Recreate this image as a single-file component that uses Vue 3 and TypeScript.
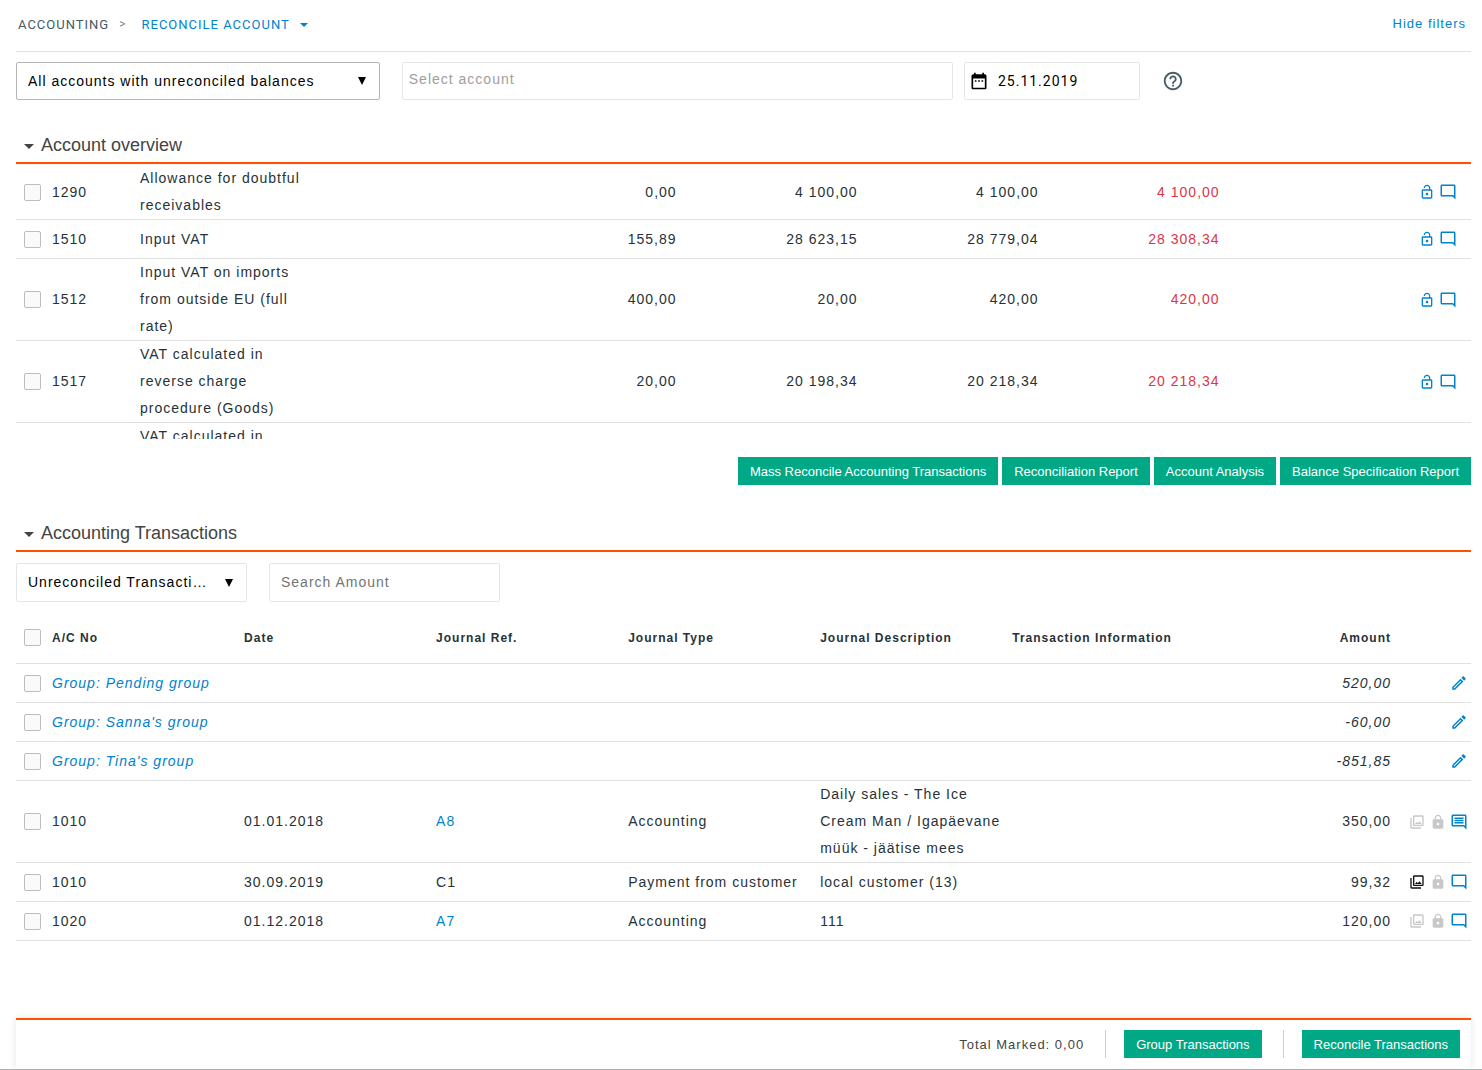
<script setup lang="ts">
import { computed, ref } from 'vue'

interface Account {
  no: string
  name: string
  values: string[]
  difference: string
}

interface Group {
  name: string
  amount: string
}

interface Transaction {
  no: string
  date: string
  journal: string
  linked: boolean
  type: string
  description: string
  amount: string
  hasPictures: boolean
  hasComment: boolean
}

const icons = {
  lockOpen:
    'M12 17c1.1 0 2-.9 2-2s-.9-2-2-2-2 .9-2 2 .9 2 2 2zm6-9h-1V6c0-2.76-2.24-5-5-5S7 3.24 7 6h1.9c0-1.71 1.39-3.1 3.1-3.1 1.71 0 3.1 1.39 3.1 3.1v2H6c-1.1 0-2 .9-2 2v10c0 1.1.9 2 2 2h12c1.1 0 2-.9 2-2V10c0-1.1-.9-2-2-2zm0 12H6V10h12v10z',
  lock: 'M18 8h-1V6c0-2.76-2.24-5-5-5S7 3.24 7 6v2H6c-1.1 0-2 .9-2 2v10c0 1.1.9 2 2 2h12c1.1 0 2-.9 2-2V10c0-1.1-.9-2-2-2zm-6 9c-1.1 0-2-.9-2-2s.9-2 2-2 2 .9 2 2-.9 2-2 2zm3.1-9H8.9V6c0-1.71 1.39-3.1 3.1-3.1 1.71 0 3.1 1.39 3.1 3.1v2z',
  bubble:
    'M21.99 4c0-1.1-.89-2-1.99-2H4c-1.1 0-2 .9-2 2v12c0 1.1.9 2 2 2h14l4 4-.01-18zM20 4v13.17L18.83 16H4V4h16z',
  comment:
    'M21.99 4c0-1.1-.89-2-1.99-2H4c-1.1 0-2 .9-2 2v12c0 1.1.9 2 2 2h14l4 4-.01-18zM20 4v13.17L18.83 16H4V4h16zM6 12h12v2H6zm0-3h12v2H6zm0-3h12v2H6z',
  pictures:
    'M20 4v12H8V4h12m0-2H8c-1.1 0-2 .9-2 2v12c0 1.1.9 2 2 2h12c1.1 0 2-.9 2-2V4c0-1.1-.9-2-2-2zm-8.5 9.67l1.69 2.26 2.48-3.1L19 15H9zM2 6v14c0 1.1.9 2 2 2h14v-2H4V6H2z',
  edit: 'M14.06 9.02l.92.92L5.92 19H5v-.92l9.06-9.06M17.66 3c-.25 0-.51.1-.7.29l-1.83 1.83 3.75 3.75 1.83-1.83c.39-.39.39-1.02 0-1.41l-2.34-2.34c-.2-.2-.45-.29-.71-.29zm-3.6 3.19L3 17.25V21h3.75L17.81 9.94l-3.75-3.75z',
  calendar:
    'M9 11H7v2h2v-2zm4 0h-2v2h2v-2zm4 0h-2v2h2v-2zm2-7h-1V2h-2v2H8V2H6v2H5c-1.11 0-1.99.9-1.99 2L3 20c0 1.1.89 2 2 2h14c1.1 0 2-.9 2-2V6c0-1.1-.9-2-2-2zm0 16H5V9h14v11z',
  help: 'M11 18h2v-2h-2v2zm1-16C6.48 2 2 6.48 2 12s4.48 10 10 10 10-4.48 10-10S17.52 2 12 2zm0 18c-4.41 0-8-3.59-8-8s3.59-8 8-8 8 3.59 8 8-3.59 8-8 8zm0-14c-2.21 0-4 1.79-4 4h2c0-1.1.9-2 2-2s2 .9 2 2c0 2-3 1.75-3 5h2c0-2.25 3-2.5 3-5 0-2.21-1.79-4-4-4z',
}

const accounts: Account[] = [
  { no: '1290', name: 'Allowance for doubtful receivables', values: ['0,00', '4 100,00', '4 100,00'], difference: '4 100,00' },
  { no: '1510', name: 'Input VAT', values: ['155,89', '28 623,15', '28 779,04'], difference: '28 308,34' },
  { no: '1512', name: 'Input VAT on imports from outside EU (full rate)', values: ['400,00', '20,00', '420,00'], difference: '420,00' },
  { no: '1517', name: 'VAT calculated in reverse charge procedure (Goods)', values: ['20,00', '20 198,34', '20 218,34'], difference: '20 218,34' },
]

const groups: Group[] = [
  { name: 'Group: Pending group', amount: '520,00' },
  { name: "Group: Sanna's group", amount: '-60,00' },
  { name: "Group: Tina's group", amount: '-851,85' },
]

const transactions: Transaction[] = [
  { no: '1010', date: '01.01.2018', journal: 'A8', linked: true, type: 'Accounting', description: 'Daily sales - The Ice Cream Man / Igapäevane müük - jäätise mees', amount: '350,00', hasPictures: false, hasComment: true },
  { no: '1010', date: '30.09.2019', journal: 'C1', linked: false, type: 'Payment from customer', description: 'local customer (13)', amount: '99,32', hasPictures: true, hasComment: false },
  { no: '1020', date: '01.12.2018', journal: 'A7', linked: true, type: 'Accounting', description: '111', amount: '120,00', hasPictures: false, hasComment: false },
]

const reports = ['Mass Reconcile Accounting Transactions', 'Reconciliation Report', 'Account Analysis', 'Balance Specification Report']

const overviewOpen = ref(true)
const transactionsOpen = ref(true)
const date = ref('25.11.2019')
const marked = ref<number[]>([])

const toNumber = (amount: string) => Number(amount.replace(/\s/g, '').replace(',', '.'))
const totalMarked = computed(() =>
  marked.value
    .reduce((sum, i) => sum + toNumber(transactions[i].amount), 0)
    .toFixed(2)
    .replace('.', ','),
)
</script>

<template>
  <div class="page">
    <header class="topbar">
      <nav class="crumbs" aria-label="Breadcrumb">
        <a class="crumb" href="#accounting">ACCOUNTING</a>
        <span class="separator">&gt;</span>
        <button class="crumb current" type="button">
          RECONCILE ACCOUNT
          <svg class="caret" viewBox="0 0 8 4" width="8" height="4"><path d="M0 0h8L4 4z" /></svg>
        </button>
      </nav>
      <a class="hide-filters" href="#filters">Hide filters</a>
    </header>

    <main class="content">
      <div class="filters">
        <div class="cell wide-gap">
          <div class="select strong">
            <select aria-label="Account filter">
              <option>All accounts with unreconciled balances</option>
            </select>
            <svg class="arrow" viewBox="0 0 8 8" width="8" height="8"><path d="M0 0h8L4 8z" /></svg>
          </div>
        </div>
        <div class="cell">
          <input class="field account" type="text" placeholder="Select account" aria-label="Account" />
        </div>
        <div class="cell wide-gap">
          <label class="field date">
            <svg viewBox="0 0 24 24" width="20" height="20"><path :d="icons.calendar" /></svg>
            <input v-model="date" type="text" aria-label="Date" />
          </label>
        </div>
        <button class="help" type="button" aria-label="Help">
          <svg viewBox="0 0 24 24" width="22" height="22"><path :d="icons.help" /></svg>
        </button>
      </div>

      <section class="overview">
        <h2 class="title">
          <button type="button" :aria-expanded="overviewOpen" @click="overviewOpen = !overviewOpen">
            <svg class="caret" viewBox="0 0 10 5" width="10" height="5"><path d="M0 0h10L5 5z" /></svg>
            Account overview
          </button>
        </h2>
        <div v-show="overviewOpen" class="scroller">
          <table class="grid">
            <colgroup>
              <col class="c-check" />
              <col class="c-no" />
              <col class="c-name" />
              <col class="c-value" span="5" />
              <col />
            </colgroup>
            <tbody>
              <tr v-for="account in accounts" :key="account.no">
                <td class="check"><input type="checkbox" :aria-label="`Select account ${account.no}`" /></td>
                <td>{{ account.no }}</td>
                <td class="name">{{ account.name }}</td>
                <td></td>
                <td v-for="(value, i) in account.values" :key="i" class="number">{{ value }}</td>
                <td class="number red">{{ account.difference }}</td>
                <td>
                  <div class="actions inset">
                    <button type="button" class="icon blue" aria-label="Lock account">
                      <svg viewBox="0 0 24 24" width="16" height="16"><path :d="icons.lockOpen" /></svg>
                    </button>
                    <button type="button" class="icon blue" aria-label="Comment">
                      <svg viewBox="0 0 24 24" width="18" height="18"><path :d="icons.bubble" /></svg>
                    </button>
                  </div>
                </td>
              </tr>
              <tr>
                <td colspan="2"></td>
                <td class="name">VAT calculated in</td>
                <td colspan="6"></td>
              </tr>
            </tbody>
          </table>
        </div>
        <div class="reports">
          <button v-for="report in reports" :key="report" class="button" type="button">{{ report }}</button>
        </div>
      </section>

      <section class="transactions">
        <h2 class="title">
          <button type="button" :aria-expanded="transactionsOpen" @click="transactionsOpen = !transactionsOpen">
            <svg class="caret" viewBox="0 0 10 5" width="10" height="5"><path d="M0 0h10L5 5z" /></svg>
            Accounting Transactions
          </button>
        </h2>
        <div v-show="transactionsOpen">
          <div class="subfilters">
            <div class="select">
              <select aria-label="Transaction filter">
                <option>Unreconciled Transactions</option>
              </select>
              <svg class="arrow" viewBox="0 0 8 8" width="8" height="8"><path d="M0 0h8L4 8z" /></svg>
            </div>
            <input class="field search" type="text" placeholder="Search Amount" aria-label="Search Amount" />
          </div>
          <table class="grid">
            <colgroup>
              <col class="c-check" />
              <col class="c-data" span="6" />
              <col />
              <col class="c-actions" />
            </colgroup>
            <thead>
              <tr>
                <th class="check"><input type="checkbox" aria-label="Select all" /></th>
                <th>A/C No</th>
                <th>Date</th>
                <th>Journal Ref.</th>
                <th>Journal Type</th>
                <th>Journal Description</th>
                <th>Transaction Information</th>
                <th class="number">Amount</th>
                <th></th>
              </tr>
            </thead>
            <tbody>
              <tr v-for="group in groups" :key="group.name" class="group">
                <td class="check"><input type="checkbox" :aria-label="group.name" /></td>
                <td colspan="6"><a href="#group">{{ group.name }}</a></td>
                <td class="number">{{ group.amount }}</td>
                <td>
                  <div class="actions">
                    <button type="button" class="icon blue" aria-label="Edit group">
                      <svg viewBox="0 0 24 24" width="18" height="18"><path :d="icons.edit" /></svg>
                    </button>
                  </div>
                </td>
              </tr>
              <tr v-for="(row, i) in transactions" :key="i">
                <td class="check"><input v-model="marked" type="checkbox" :value="i" :aria-label="`Select ${row.journal}`" /></td>
                <td>{{ row.no }}</td>
                <td>{{ row.date }}</td>
                <td><a v-if="row.linked" href="#journal">{{ row.journal }}</a><template v-else>{{ row.journal }}</template></td>
                <td>{{ row.type }}</td>
                <td>{{ row.description }}</td>
                <td></td>
                <td class="number">{{ row.amount }}</td>
                <td>
                  <div class="actions">
                    <button type="button" class="icon" :class="row.hasPictures ? 'black' : 'faded'" aria-label="Pictures">
                      <svg viewBox="0 0 24 24" width="16" height="16"><path :d="icons.pictures" /></svg>
                    </button>
                    <button type="button" class="icon faded" aria-label="Locked">
                      <svg viewBox="0 0 24 24" width="16" height="16"><path :d="icons.lock" /></svg>
                    </button>
                    <button type="button" class="icon blue" aria-label="Comment">
                      <svg viewBox="0 0 24 24" width="18" height="18"><path :d="row.hasComment ? icons.comment : icons.bubble" /></svg>
                    </button>
                  </div>
                </td>
              </tr>
            </tbody>
          </table>
        </div>
      </section>
    </main>

    <footer class="footer">
      <div class="bar">
        <span class="total">Total Marked: {{ totalMarked }}</span>
        <span class="divider"></span>
        <button class="button" type="button">Group Transactions</button>
        <span class="divider"></span>
        <button class="button" type="button">Reconcile Transactions</button>
      </div>
    </footer>
  </div>
</template>

<style>
body {
  margin: 0;
  background: #fff;
}
</style>

<style scoped>
.page,
.page * {
  box-sizing: border-box;
}

.page {
  display: flex;
  flex-direction: column;
  min-height: 100vh;
  color: #263238;
  font-family: 'Liberation Sans', Arial, sans-serif;
  font-size: 14px;
  line-height: 27px;
  letter-spacing: 1px;
}

button,
input,
select {
  margin: 0;
  padding: 0;
  border: 0;
  background: none;
  color: inherit;
  font: inherit;
  letter-spacing: inherit;
}

button {
  cursor: pointer;
}

a {
  color: #0082cc;
  text-decoration: none;
}

svg {
  display: block;
  fill: currentColor;
}

.topbar {
  display: flex;
  align-items: center;
  justify-content: space-between;
  height: 52px;
  margin: 0 11px 0 16px;
  padding: 0 5px 4px 2px;
  border-bottom: 1px solid #e0e0e0;
  font-size: 13px;
}

.crumbs {
  display: flex;
  align-items: center;
  padding-top: 2px;
  font-family: Roboto, sans-serif;
}

.crumb {
  color: #455a64;
}

.separator {
  margin: 0 15px 0 10px;
  color: #888;
  font-size: 12px;
}

.current {
  display: flex;
  align-items: center;
  gap: 10px;
  color: #0082cc;
}

.content {
  margin: 0 11px 0 16px;
}

.filters {
  display: grid;
  grid-template-columns: minmax(0, 35fr) minmax(0, 51fr) minmax(0, 18fr) minmax(0, 28fr);
  align-items: center;
  margin-top: 10px;
}

.cell {
  padding-right: 11px;
}

.wide-gap {
  padding-right: 22px;
}

.field {
  width: 100%;
  height: 38px;
  border: 1px solid #e6e6e6;
  border-radius: 2px;
}

.field::placeholder {
  color: #757575;
  opacity: 1;
}

.account {
  display: block;
  padding: 0 6px 4px;
}

.account::placeholder {
  color: #9e9e9e;
}

.date {
  display: flex;
  align-items: center;
  gap: 9px;
  padding: 0 4px;
  color: #000;
  font-family: Roboto, sans-serif;
}

.date input {
  flex: 1;
  min-width: 0;
}

.help {
  justify-self: start;
  color: #455a64;
}

.select {
  display: grid;
  align-items: center;
  height: 38px;
  border: 1px solid #e6e6e6;
  border-radius: 2px;
  color: #000;
}

.strong {
  border-color: #b5b5b5;
}

.select select {
  grid-area: 1 / 1;
  width: 100%;
  height: 100%;
  padding: 0 32px 0 11px;
  overflow: hidden;
  appearance: none;
  text-overflow: ellipsis;
  white-space: nowrap;
}

.arrow {
  grid-area: 1 / 1;
  justify-self: end;
  margin-right: 13px;
  pointer-events: none;
}

.title {
  margin: 0;
  border-bottom: 2px solid #ff5100;
  color: #444;
  font-size: 18px;
  font-weight: 400;
  letter-spacing: 0;
}

.title button {
  display: flex;
  align-items: center;
  gap: 7px;
  height: 35px;
  padding: 2px 0 0 8px;
}

.title .caret {
  margin-top: 2px;
}

.overview {
  margin-top: 27px;
}

.transactions {
  margin-top: 30px;
}

.scroller {
  height: 275px;
  border-top: 1px solid #f2f5f7;
  overflow-y: auto;
  scrollbar-width: none;
}

.grid {
  width: 100%;
  table-layout: fixed;
  border-collapse: separate;
  border-spacing: 0;
}

.c-check {
  width: 36px;
}

.c-no {
  width: 88px;
}

.c-name {
  width: 12%;
}

.c-value {
  width: 12.44%;
}

.c-data {
  width: 13.2%;
}

.c-actions {
  width: 80px;
}

.grid td,
.grid th {
  height: 39px;
  padding: 0;
  border-bottom: 1px solid #e0e0e0;
  text-align: left;
  vertical-align: middle;
}

.grid th {
  height: 52px;
  padding-top: 2px;
  font-size: 12px;
  font-weight: 700;
}

.grid .check {
  padding: 0 0 0 8px;
}

.grid .name {
  padding-right: 10px;
}

.scroller tr:last-child td {
  height: 82px;
  vertical-align: top;
}

.grid .number {
  text-align: right;
}

.grid .red {
  color: #dc3545;
}

.group {
  font-style: italic;
}

.check input {
  display: block;
  width: 17px;
  height: 17px;
  border: 1px solid #bdbdbd;
  border-radius: 2px;
  background: #fafafa;
  appearance: none;
}

.check input:checked {
  background: #0082cc;
}

.actions {
  display: flex;
  justify-content: flex-end;
  gap: 3px;
  padding-right: 3px;
}

.inset {
  padding-right: 14px;
}

.icon {
  display: grid;
  place-items: center;
  width: 18px;
  height: 18px;
}

.blue {
  color: #0082cc;
}

.black {
  color: #111;
}

.faded {
  color: #c8c8c8;
}

.button {
  height: 28px;
  padding: 0 12px;
  background: #00a886;
  color: #fff;
  font-size: 13px;
  letter-spacing: 0;
  white-space: nowrap;
}

.reports {
  display: flex;
  justify-content: flex-end;
  gap: 4px;
  margin-top: 18px;
}

.subfilters {
  display: flex;
  gap: 22px;
  margin-top: 11px;
}

.subfilters .select,
.subfilters .field {
  width: 231px;
  height: 39px;
}

.search {
  padding: 0 11px 2px;
}

.subfilters + .grid {
  margin-top: 10px;
}

.footer {
  margin-top: auto;
  padding: 24px 11px 0 16px;
  border-bottom: 1px solid #b0b0b0;
  overflow: hidden;
}

.bar {
  display: flex;
  align-items: center;
  justify-content: flex-end;
  height: 51px;
  padding: 0 11px 1px 0;
  border-top: 2px solid #ff5100;
  box-shadow: 0 0 8px rgba(0, 0, 0, 0.1);
}

.total {
  color: #444;
  font-size: 13px;
}

.divider {
  width: 1px;
  height: 28px;
  margin: 0 18px 0 21px;
  background: #ccc;
}
</style>
